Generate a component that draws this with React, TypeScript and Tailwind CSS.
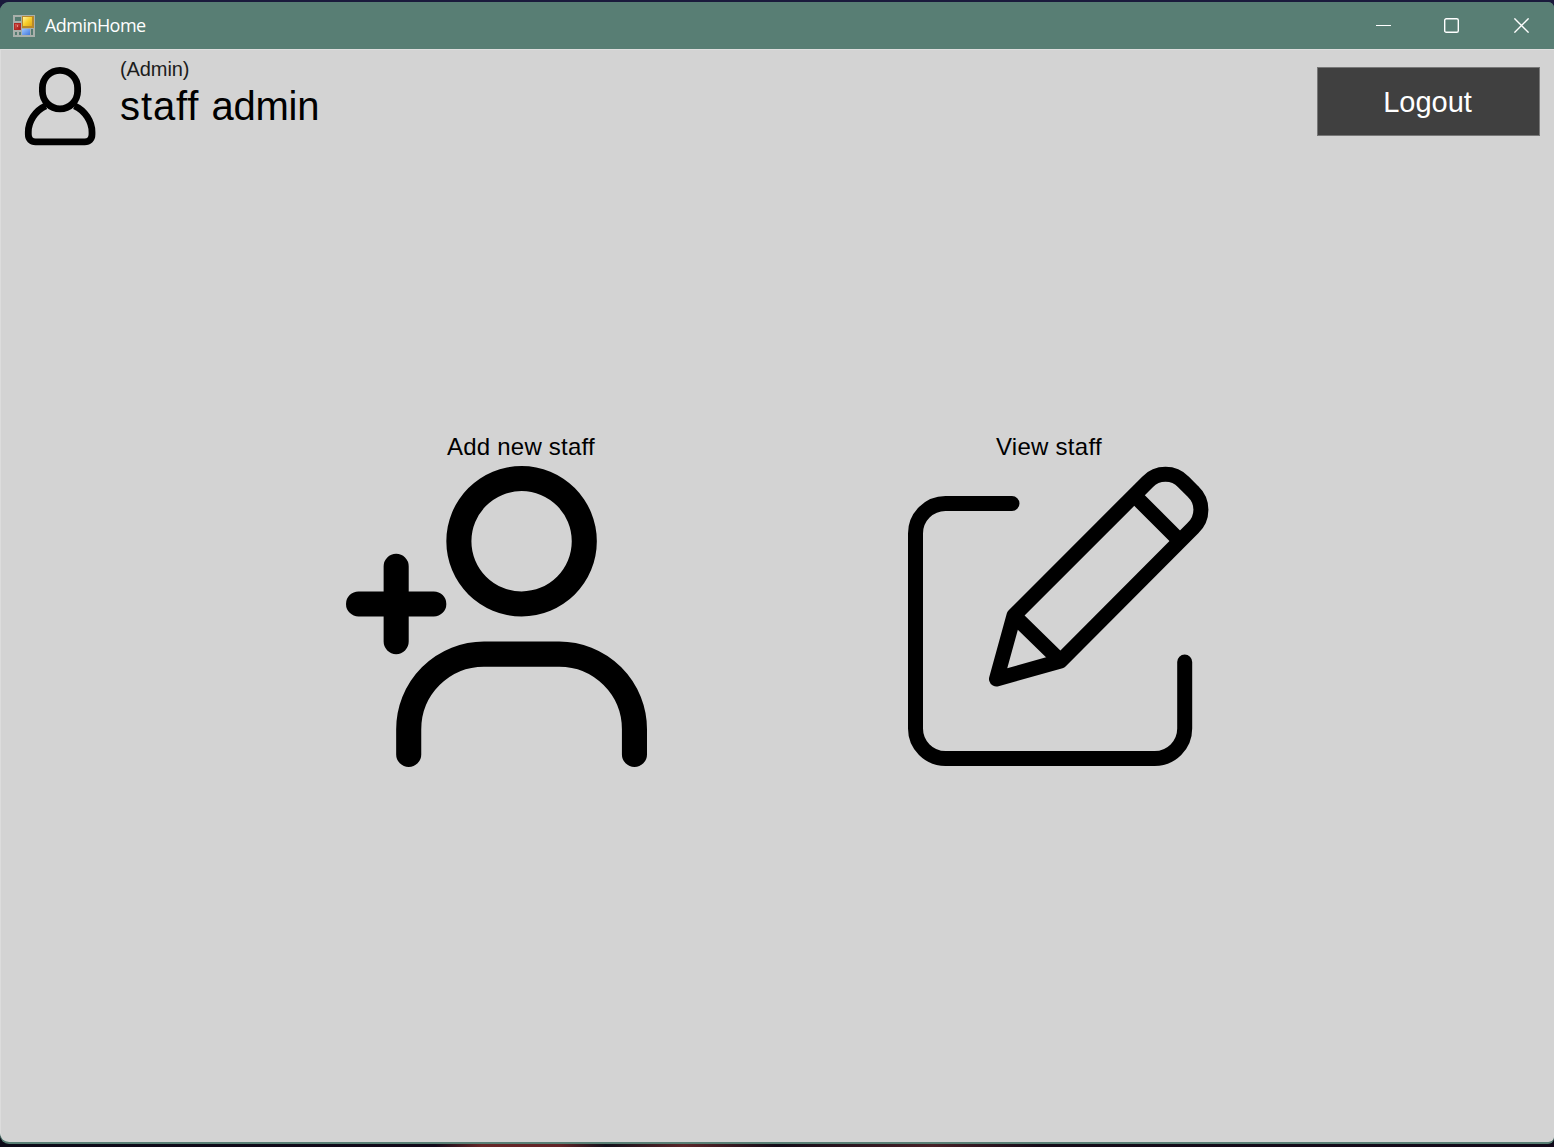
import React from "react";

function AppIcon() {
  return (
    <svg className="h-[22px] w-[22px]" viewBox="0 0 22 22" shapeRendering="crispEdges">
      <defs>
        <linearGradient id="gold" x1="0" y1="0" x2="1" y2="1">
          <stop offset="0" stopColor="#fff3a0" />
          <stop offset="0.5" stopColor="#f8cf2c" />
          <stop offset="1" stopColor="#e0a818" />
        </linearGradient>
        <linearGradient id="blue" x1="0" y1="0" x2="1" y2="1">
          <stop offset="0" stopColor="#9cc6ff" />
          <stop offset="1" stopColor="#4478dc" />
        </linearGradient>
        <linearGradient id="red" x1="0" y1="0" x2="1" y2="1">
          <stop offset="0" stopColor="#cf5a50" />
          <stop offset="1" stopColor="#a81614" />
        </linearGradient>
      </defs>
      <rect width="22" height="22" fill="#a9b0ab" />
      <rect x="2" y="2" width="6" height="4" fill="#557c71" />
      <rect x="9" y="1" width="12" height="12" fill="#b8892a" />
      <rect x="10" y="2" width="9" height="9" fill="url(#gold)" />
      <rect x="1" y="8" width="7" height="7" fill="#b02a24" />
      <rect x="2" y="9" width="5" height="5" fill="url(#red)" />
      <rect x="4" y="10" width="1" height="2" fill="#e88c80" />
      <rect x="2" y="17" width="2" height="3" fill="#557c71" />
      <rect x="6" y="17" width="2" height="3" fill="#557c71" />
      <rect x="9" y="14" width="8" height="6" fill="url(#blue)" />
      <rect x="18" y="14" width="2" height="6" fill="#557c71" />
    </svg>
  );
}

function TitleBar() {
  return (
    <header className="flex h-[47px] shrink-0 items-center bg-[#587e74] pl-[13px] text-white">
      <AppIcon />
      <span className="ml-2.5 flex-1 pb-0.5 font-['Open_Sans',sans-serif] text-[18px] leading-6 tracking-[-0.55px]">
        AdminHome
      </span>
      <button aria-label="Minimize" className="flex h-full w-[70px] items-center justify-center">
        <svg className="h-[15px] w-[15px]" viewBox="0 0 15 15" stroke="currentColor">
          <path d="M0 7.500h15" />
        </svg>
      </button>
      <button aria-label="Maximize" className="flex h-full w-[67px] items-center justify-center">
        <svg className="h-[15px] w-[15px]" viewBox="0 0 15 15" fill="none" stroke="currentColor" strokeWidth="1.4">
          <rect x=".7" y=".7" width="13.600" height="13.600" rx="1.6" />
        </svg>
      </button>
      <button aria-label="Close" className="mr-[-4px] flex h-full w-[73px] items-center justify-center">
        <svg className="h-[15px] w-[15px]" viewBox="0 0 15 15" stroke="currentColor" strokeWidth="1.4">
          <path d="M.4.4l14.200 14.200M14.600.4L.4 14.600" />
        </svg>
      </button>
    </header>
  );
}

function UserIcon() {
  return (
    <svg className="h-20 w-[72px]" viewBox="24 66 72 80" fill="none" stroke="#000" strokeWidth="6.8">
      <rect x="42.4" y="70.3" width="35.2" height="38.600" rx="17.6" />
      <path d="M45.8 105.800C35 110.500 28.300 122 28.300 132v2.200c0 4.800 2.800 7.600 7.300 7.600h49.100c4.500 0 7.300-2.800 7.300-7.600V132c0-10-6.700-21.500-17.500-26.200" />
    </svg>
  );
}

function AddUserIcon() {
  return (
    <svg className="h-[301px] w-[301px]" viewBox="0 0 24 24">
      <path d="M14 12a6 6 0 1 0-6-6 6.006 6.006 0 0 0 6 6zm0-10a4 4 0 1 1-4 4 4 4 0 0 1 4-4z" />
      <path
        d="M5 23v-2a6 6 0 0 1 6-6h6a6 6 0 0 1 6 6v2M4 8v6M1 11h6"
        fill="none"
        stroke="#000"
        strokeWidth="2"
        strokeLinecap="round"
      />
    </svg>
  );
}

function EditIcon() {
  return (
    <svg
      className="h-[301px] w-[302px]"
      viewBox="907 466 302 301"
      fill="none"
      stroke="#000"
      strokeWidth="15"
      strokeLinecap="round"
      strokeLinejoin="round"
    >
      <path d="M1012 503.500H945.500a30 30 0 0 0-30 30V728.500a30 30 0 0 0 30 30H1154.700a30 30 0 0 0 30-30V662" />
      <path d="M996.500 679L1014 615.500 1147.500 482a25 25 0 0 1 36 0L1193 491.500a25 25 0 0 1 0 36.500L1060.500 661Z" />
      <path d="M1014 615.500L1060.500 661M1134 495l46 46" strokeLinecap="butt" />
    </svg>
  );
}

export default function App() {
  return (
    <div className="flex h-[1147px] w-[1554px] flex-col bg-[linear-gradient(90deg,#0c0a18_0%,#12091a_28%,#662627_31%,#622327_36%,#12101b_39%,#5a2529_44%,#140c19_50%,#472027_60%,#150b19_67%,#13091a_100%)]">
      <div className="h-0.5 shrink-0 bg-[#1a1a3c]" />
      <div className="flex h-[1142px] bg-[linear-gradient(#1a1a3c_0_50%,#0c0a18_50%)]">
        <div className="flex flex-1 flex-col overflow-hidden rounded-tl-[9px] rounded-tr-[6px] rounded-bl-[9px] rounded-br-[6px] border-b-2 border-[#587e74] bg-[#587e74]">
          <TitleBar />
          <main className="flex flex-1 flex-col rounded-bl-[9px] rounded-br-[5px] border-t border-l border-t-[#dedede] border-l-[#dcdcdc] bg-[#d3d3d3] font-['Liberation_Sans',Arial,sans-serif] text-black">
            <div className="flex h-[384px] justify-between pt-[6px] pr-[14px] pl-[23px]">
              <div className="flex gap-6">
                <div className="pt-2.5">
                  <UserIcon />
                </div>
                <div className="pt-0.5">
                  <p className="text-[20px] leading-[22px] tracking-[-0.1px] text-[#1c1c1c]">(Admin)</p>
                  <h1 className="pt-0.5 text-[40px] leading-[48px] tracking-[-0.2px]">
                    <span className="tracking-[0.9px]">staff </span>admin
                  </h1>
                </div>
              </div>
              <button className="mt-[11px] h-[69px] w-[223px] border border-[#777] bg-[#404040] pt-0.5 pr-0.5 text-[29px] leading-none text-white">
                Logout
              </button>
            </div>
            <div className="flex">
              <section className="ml-[345px] flex w-[301px] flex-col">
                <h2 className="-mt-px ml-[101px] h-[33px] text-[24px] leading-7 tracking-[0.22px] whitespace-nowrap">
                  Add new staff
                </h2>
                <AddUserIcon />
              </section>
              <section className="ml-[260px] flex w-[302px] flex-col">
                <h2 className="-mt-px ml-[89px] h-[33px] text-[24px] leading-7 tracking-[0.27px] whitespace-nowrap">
                  View staff
                </h2>
                <EditIcon />
              </section>
            </div>
          </main>
        </div>
      </div>
    </div>
  );
}
